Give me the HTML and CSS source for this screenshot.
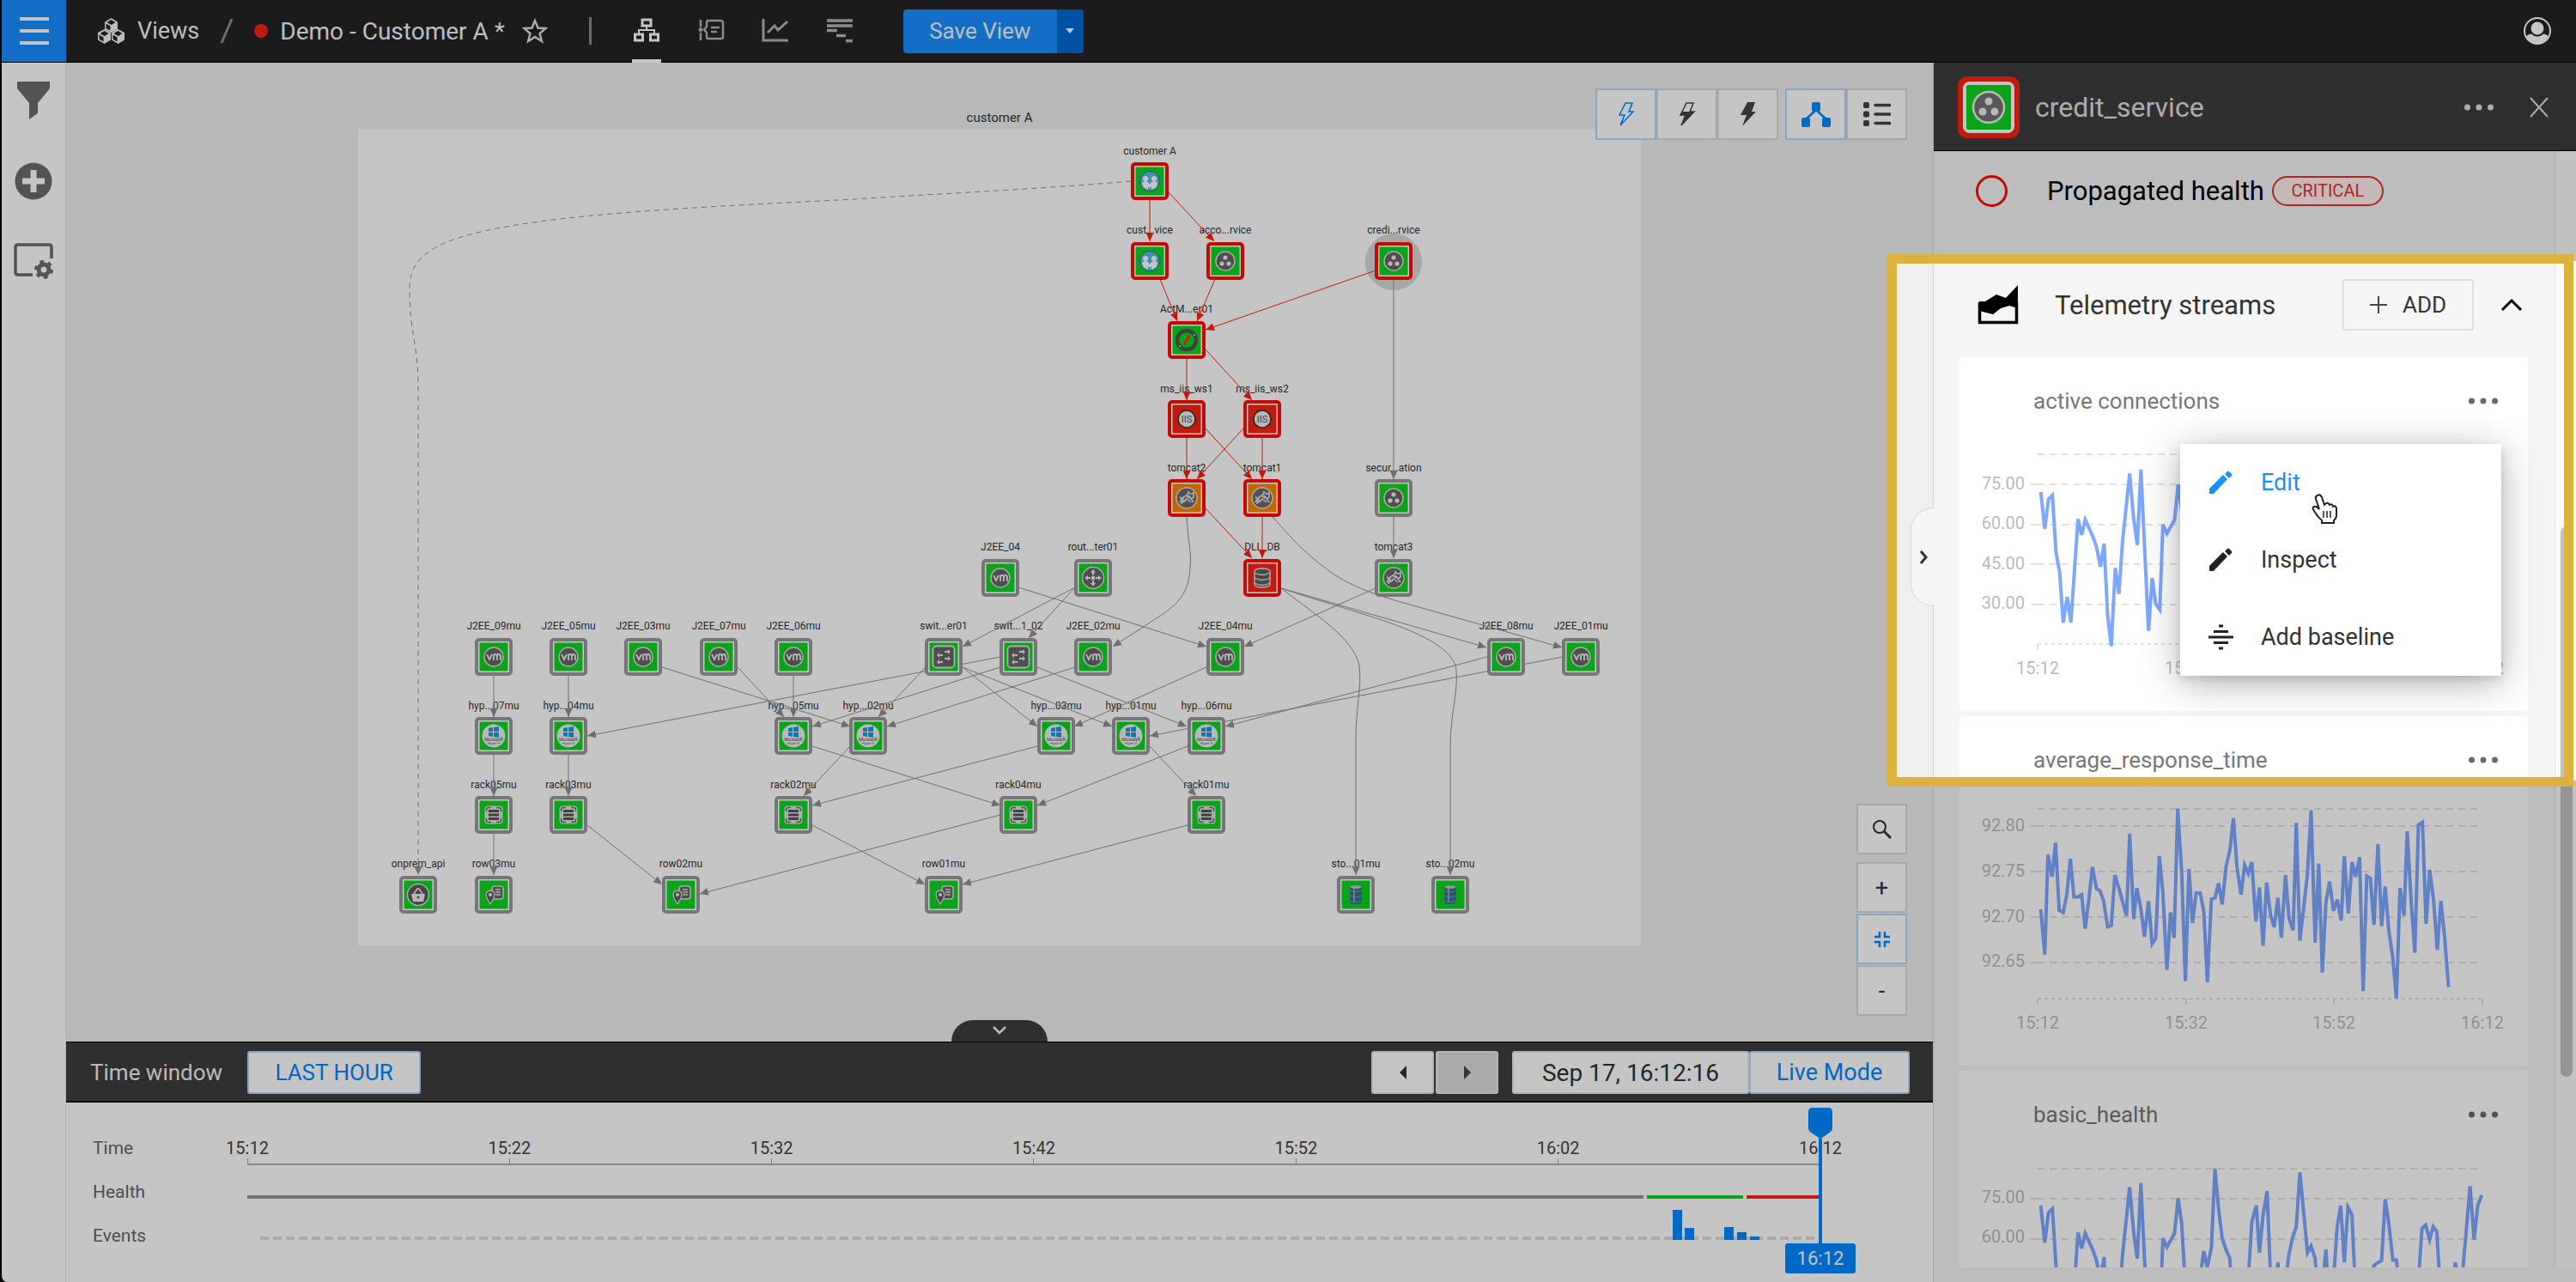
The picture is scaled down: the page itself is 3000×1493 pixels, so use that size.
FILE: index.html
```html
<!DOCTYPE html>
<html lang="en">
<head>
<meta charset="utf-8">
<title>Demo - Customer A</title>
<link rel="stylesheet" href="styles.css">
</head>
<body>
<svg class="defs" width="0" height="0" aria-hidden="true">
  <defs>
    <marker id="arrow-red" viewBox="0 0 10 9" refX="10" refY="4.5" markerWidth="10" markerHeight="9" markerUnits="userSpaceOnUse" orient="auto"><path d="M0 0L10 4.5 0 9z" fill="#ff2010"/></marker>
    <marker id="arrow-gray" viewBox="0 0 10 9" refX="10" refY="4.5" markerWidth="10" markerHeight="9" markerUnits="userSpaceOnUse" orient="auto"><path d="M0 0L10 4.5 0 9z" fill="#8f8f8f"/></marker>
    <g id="frame">
      <rect x="-20" y="-20" width="40" height="40" rx="3" fill="#fff" stroke-width="4"/>
    </g>
    <g id="i-people">
      <circle r="11.5" fill="#58b9e8" stroke="#2a7d63"/>
      <g fill="#fff"><circle cx="-5" cy="-3" r="3"/><circle cx="5" cy="-3" r="3"/><path d="M-9 3q0-3 4-3 3 0 5 4 2-4 5-4 4 0 4 3l-2 5H5L3 10H2V6L0 8-2 6V10H-3L-5 8H-7z"/></g>
    </g>
    <g id="i-dots">
      <circle r="11" fill="#666" stroke="#ddd" stroke-width="1.5"/>
      <g fill="#eee"><circle cy="-4" r="2.6"/><circle cx="-4" cy="3" r="2.6"/><circle cx="4" cy="3" r="2.6"/></g>
    </g>
    <g id="i-active">
      <circle r="11" fill="none" stroke="#525252" stroke-width="4.5"/>
      <path d="M-4 6Q-3-3 4-7 4 0-2 6z" fill="#d44b14"/><circle cx="9" cy="-6" r="1" fill="#ddd"/><circle cx="-8" cy="7" r="1" fill="#ddd"/>
    </g>
    <g id="i-iis">
      <circle r="10" fill="#eee" stroke="#333" stroke-width="1.5"/>
      <text y="4" text-anchor="middle" font-size="11" fill="#555">IIS</text>
    </g>
    <g id="i-tomcat">
      <circle r="12" fill="#6a6a6a" stroke="#ddd" stroke-width="1.5"/>
      <path d="M-8 5L-4-1 1-4 2-7 4-5 7-5 8-7 8-1 5 1 8 5M-4-1L-5 5 0 1 5 5M-1-3L3 0M-8-1L-4 2M-7 6L-1 3M2-3L6 2" fill="none" stroke="#e2e2e2" stroke-width="1.6"/>
    </g>
    <g id="i-vm">
      <circle r="11" fill="#666" stroke="#ddd" stroke-width="1.5"/>
      <path d="M-8-3L-5 3-2-3M0 4V-2Q0-3 2-3 4-3 4 0V4M4-1Q4-3 6-3 8-3 8 0V4" fill="none" stroke="#eee" stroke-width="1.8"/>
    </g>
    <g id="i-router">
      <circle r="12.5" fill="#666" stroke="#ddd" stroke-width="1.5"/>
      <rect x="-2" y="-2" width="4" height="4" fill="#eee"/>
      <path d="M0-10L3-6H1V-3H-1V-6H-3zM0 10L3 6H1V3H-1V6H-3zM-10 0L-6-3V-1H-3V1H-6V3zM10 0L6-3V-1H3V1H6V3z" fill="#eee"/>
    </g>
    <g id="i-switch">
      <rect x="-12.5" y="-12.5" width="25" height="25" rx="4" fill="#666" stroke="#ddd" stroke-width="1.8"/>
      <path d="M-8-2L-5-5V-3H-1V-1H-5V1zM-8 6L-5 3V5H-1V7H-5V9zM8-6L5-9V-7H1V-5H5V-3zM8 2L5-1V1H1V3H5V5z" fill="#e6e6e6"/>
    </g>
    <g id="i-db">
      <path d="M-9-7Q-9-11 0-11 9-11 9-7V7Q9 11 0 11-9 11-9 7z" fill="#5c5c5c" stroke="#ddd" stroke-width="1.5"/>
      <path d="M-9-6Q0-1 9-6M-9 0Q0 5 9 0M-9 6Q0 11 9 6" fill="none" stroke="#ddd" stroke-width="1.4"/>
    </g>
    <g id="i-win">
      <circle r="13.5" fill="#f0f0f0"/>
      <path d="M-6-9L-1-10V-5H-6zM0-10L6-11V-5H0zM-6-4H-1V1L-6 0zM0-4H6V2L0 1z" fill="#0c9ce8"/>
      <text y="6" text-anchor="middle" font-size="5" fill="#444">Microsoft</text>
      <text y="10" text-anchor="middle" font-size="4" fill="#666">Hyper-V</text>
    </g>
    <g id="i-rack">
      <rect x="-10.5" y="-10.5" width="21" height="21" rx="4" fill="#e0e0e0"/>
      <path d="M-8.500-4V-6Q-8.500-8.500-6-8.500H-3M8.500-4V-6Q8.500-8.500 6-8.500H3M-8.500 4V6Q-8.500 8.500-6 8.500H-3M8.500 4V6Q8.500 8.500 6 8.500H3" fill="none" stroke="#6c6c6c" stroke-width="1.500"/>
      <path d="M-6-4.500H6M-6 0H6M-6 4.500H6" stroke="#555" stroke-width="2.800"/>
    </g>
    <g id="i-row">
      <rect x="-2" y="-10" width="13" height="15" rx="3" fill="#666" stroke="#ddd" stroke-width="1.500"/>
      <path d="M2-6H8M2-3H8M2 0H8" stroke="#ddd" stroke-width="1.300"/>
      <path d="M-4 11L-8 4Q-11-4-4-5 3-4 0 4z" fill="#5c5c5c" stroke="#ddd" stroke-width="1.300"/><circle cx="-4" cy="0" r="2" fill="#eee"/>
    </g>
    <g id="i-basket">
      <circle r="12.5" fill="#5a5a5a" stroke="#ddd" stroke-width="1.5"/>
      <path d="M-8-1H8L6 8H-6z" fill="#eee"/><path d="M-5-1L-1-7H1L5-1" fill="none" stroke="#eee" stroke-width="1.6"/><circle cy="3" r="1.5" fill="#5a5a5a"/>
    </g>
    <g id="i-store">
      <path d="M-7-8Q-7-11 0-11 7-11 7-8V8Q7 11 0 11-7 11-7 8z" fill="#55636d"/>
      <path d="M-7-5Q0-2 7-5M-7 1Q0 4 7 1M-7 7Q0 10 7 7" fill="none" stroke="#1d9ad6" stroke-width="2.2"/>
      <path d="M-2-7V9" stroke="#b9c3ca" stroke-width="2" opacity=".6"/>
      <ellipse cy="-9" rx="6.500" ry="2" fill="#b9c3ca"/>
    </g>
    <g id="ok"><use href="#frame" stroke="#999"/><rect x="-16.5" y="-16.5" width="33" height="33" rx="1" fill="#0ed322"/></g>
    <g id="ok-crit"><use href="#frame" stroke="#ff0d04"/><rect x="-16.5" y="-16.5" width="33" height="33" rx="1" fill="#0ed322"/></g>
    <g id="warn-crit"><use href="#frame" stroke="#ff0d04"/><rect x="-16.5" y="-16.5" width="33" height="33" rx="1" fill="#ff8300"/></g>
    <g id="crit"><use href="#frame" stroke="#ff0d04"/><rect x="-16.5" y="-16.5" width="33" height="33" rx="1" fill="#f92413"/></g>
    <g id="pencil"><path d="M1 28V22L17 6 22 11 6 28z"/><path d="M19 5L22 2Q23 1 24 2L27 5Q28 6 27 7L24 10z"/></g>
    <polyline id="load-line" fill="none" stroke="#7da8ff" stroke-width="4" vector-effect="non-scaling-stroke" transform="translate(-102 -346) scale(.523 .3782)" points="376,1330 385,1444 393,1353 402,1340 410,1518 418,1575 426,1732 435,1653 443,1732 459,1413 467,1462 475,1415 492,1467 500,1498 509,1560 517,1489 525,1710 533,1804 542,1564 550,1644 558,1484 574,1273 583,1413 591,1493 599,1261 616,1757 624,1595 632,1675 641,1692 648,1431 657,1458 674,1415 682,1307 690,1387 698,1580 714,1700 730,1560 739,1470 747,1520 756,1458 764,1216 772,1340 780,1430 789,1468 797,1492 805,1660 821,1720 838,1560 846,1380 856,1330 863,1475 871,1360 880,1285 888,1560 896,1680 904,1505 912,1680 921,1560 929,1478 937,1428 945,1395 953,1228 961,1345 970,1475 978,1455 987,1492 995,1640 1003,1580 1011,1465 1019,1640 1028,1560 1036,1395 1044,1330 1052,1505 1060,1335 1069,1358 1077,1600 1110,1570 1118,1515 1127,1505 1135,1500 1143,1310 1151,1385 1160,1498 1168,1498 1176,1600 1217,1560 1225,1400 1233,1390 1242,1435 1250,1395 1258,1410 1266,1600 1290,1640 1299,1505 1307,1560 1316,1525 1324,1400 1332,1270 1341,1435 1349,1330 1358,1298"/>
  </defs>
</svg>

<div class="app">
  <header class="topbar">
    <button class="burger" aria-label="Menu"><span></span><span></span><span></span></button>
    <nav class="crumbs">
      <a class="views" href="#views">
        <svg width="31" height="30" viewBox="0 0 31 30" fill="#f5f5f5"><path d="M15.500 0L23 4.500V13L15.500 17 8 13V4.500zM7.500 13L15 17V25.500L7.500 30 0 25.500V17zM23.500 13L31 17V25.500L23.500 30 16 25.500V17z"/><path d="M15.500 2L20.500 5 15.500 8 10.500 5zM7.500 15L12.500 18 7.500 21 2.500 18zM23.500 15L28.500 18 23.500 21 18.500 18zM9.500 6.500L14.500 9.500V14.500L9.500 12zM1.500 19.500L6.500 22.500V27.500L1.500 24.500zM17.500 19.500L22.500 22.500V27.500L17.500 24.500z" fill="#232323"/></svg>
        Views
      </a>
      <svg width="16" height="30" viewBox="0 0 16 30"><path d="M14 1L2 29" stroke="#8c8c8c" stroke-width="3"/></svg>
      <span class="view-name"><i class="dot"></i>Demo - Customer A *</span>
      <button class="icon-btn" aria-label="Add to favourites"><svg width="30" height="30" viewBox="0 0 30 30"><path d="M15 3L18.500 11.500 27.500 12 20.500 18 23 27 15 22 7 27 9.500 18 2.500 12 11.500 11.500z" fill="none" stroke="#e0e0e0" stroke-width="2.400"/></svg></button>
    </nav>
    <i class="bar-divider"></i>
    <nav class="tabs">
      <button class="tab active" aria-label="Topology"><svg width="32" height="30" viewBox="0 0 32 30" fill="none" stroke="#fff" stroke-width="3"><rect x="11" y="3" width="10" height="7"/><rect x="2.500" y="20" width="9" height="7"/><rect x="20.500" y="20" width="9" height="7"/><path d="M16 10V14M7 20V15H25V20" stroke-width="2"/></svg></button>
      <button class="tab" aria-label="Events"><svg width="32" height="30" viewBox="0 0 32 30" fill="none" stroke="#b5b5b5" stroke-width="2.500"><path d="M4 3V27"/><circle cx="4" cy="14.500" r="3" fill="#b5b5b5" stroke="#232323" stroke-width="1"/><path d="M12 4H27Q30 4 30 7V23Q30 25 27 25H13Q11 25 11 23V18L8 14.500 11 11V6Q11 4 13 4M16 12H26M16 17H23"/></svg></button>
      <button class="tab" aria-label="Telemetry"><svg width="32" height="30" viewBox="0 0 32 30" fill="none" stroke="#b5b5b5" stroke-width="3"><path d="M2 2V27H31M7 18L15 10 19 15 30 5"/></svg></button>
      <button class="tab" aria-label="Traces"><svg width="32" height="30" viewBox="0 0 32 30" stroke="#b5b5b5" stroke-width="3.500"><path d="M1 4H31M1 10H31M1 15.500H13M12 21.500H23M23 27.500H31"/></svg></button>
    </nav>
    <div class="save">
      <button class="save-main">Save View</button><button class="save-more" aria-label="More save options"><svg width="10" height="8" viewBox="0 0 10 8"><path d="M0 1H10L5 7z" fill="#fff"/></svg></button>
    </div>
    <button class="icon-btn avatar" aria-label="Account"><svg width="34" height="34" viewBox="0 0 34 34"><circle cx="17" cy="17" r="15" fill="none" stroke="#fff" stroke-width="2"/><path d="M4 23Q8 20 12 20H22Q26 20 30 23 26 32 17 32 8 32 4 23z" fill="#fff"/><circle cx="17" cy="14" r="8.500" fill="#fff" stroke="#232323" stroke-width="2"/></svg></button>
  </header>

  <div class="body">
    <aside class="rail">
      <button class="icon-btn" aria-label="Filter"><svg width="40" height="44" viewBox="0 0 40 44" fill="#6c6c6c"><path d="M1 0H39V8L25 25V37L15 44V25L1 8z"/></svg></button>
      <button class="icon-btn" aria-label="Add"><svg width="44" height="44" viewBox="0 0 44 44"><circle cx="22" cy="22" r="21.500" fill="#6c6c6c"/><path d="M22 9V35M9 22H35" stroke="#fff" stroke-width="7"/></svg></button>
      <button class="icon-btn" aria-label="View settings"><svg width="46" height="42" viewBox="0 0 46 42"><path d="M22 37H5Q2 37 2 34V5Q2 2 5 2H41Q44 2 44 5V18" fill="none" stroke="#6c6c6c" stroke-width="3.500"/><circle cx="35" cy="31" r="6" fill="none" stroke="#6c6c6c" stroke-width="5"/><circle cx="35" cy="31" r="9" fill="none" stroke="#6c6c6c" stroke-width="4" stroke-dasharray="4.400 5"/></svg></button>
    </aside>

    <main class="center">
      <section class="stage">
        <div class="canvas-title">customer A</div>
        <svg class="graph" viewBox="417 150 1494 951" role="img" aria-label="Component topology">
          <rect class="sheet" x="417" y="150" width="1494" height="951"/>
          <circle cx="1623" cy="305" r="33" fill="#d8d8d8"/>
          <g class="labels">
            <text x="1339" y="180">customer A</text><text x="1339" y="272">cust...vice</text><text x="1427" y="272">acco...rvice</text><text x="1623" y="272">credi...rvice</text>
            <text x="1382" y="364">ActM...er01</text><text x="1382" y="457">ms_iis_ws1</text><text x="1470" y="457">ms_iis_ws2</text>
            <text x="1382" y="549">tomcat2</text><text x="1470" y="549">tomcat1</text><text x="1623" y="549">secur...ation</text>
            <text x="1165" y="641">J2EE_04</text><text x="1273" y="641">rout...ter01</text><text x="1470" y="641">DLL_DB</text><text x="1623" y="641">tomcat3</text>
            <text x="575" y="733">J2EE_09mu</text><text x="662" y="733">J2EE_05mu</text><text x="749" y="733">J2EE_03mu</text><text x="837" y="733">J2EE_07mu</text><text x="924" y="733">J2EE_06mu</text><text x="1099" y="733">swit...er01</text><text x="1186" y="733">swit...1_02</text><text x="1273" y="733">J2EE_02mu</text><text x="1427" y="733">J2EE_04mu</text><text x="1754" y="733">J2EE_08mu</text><text x="1841" y="733">J2EE_01mu</text>
            <text x="575" y="826">hyp...07mu</text><text x="662" y="826">hyp...04mu</text><text x="924" y="826">hyp...05mu</text><text x="1011" y="826">hyp...02mu</text><text x="1230" y="826">hyp...03mu</text><text x="1317" y="826">hyp...01mu</text><text x="1405" y="826">hyp...06mu</text>
            <text x="575" y="918">rack05mu</text><text x="662" y="918">rack03mu</text><text x="924" y="918">rack02mu</text><text x="1186" y="918">rack04mu</text><text x="1405" y="918">rack01mu</text>
            <text x="487" y="1010">onprem_api</text><text x="575" y="1010">row03mu</text><text x="793" y="1010">row02mu</text><text x="1099" y="1010">row01mu</text><text x="1579" y="1010">sto...01mu</text><text x="1689" y="1010">sto...02mu</text>
          </g>
          <path d="M1317 211C1200 221 1050 228 995 232 800 242 600 250 520 282 485 297 477 315 477 335 477 390 487 400 487 450V1019" class="edge" stroke-dasharray="6 5" marker-end="url(#arrow-gray)"/>
          <g class="edge">
            <path d="M1623 325V558"/><path d="M1623 602V650"/>
            <path d="M1382 602C1383 628 1388 640 1386 662 1384 690 1374 702 1350 718L1296 753"/>
            <path d="M1482 602C1500 622 1515 640 1539 658 1565 680 1595 690 1624 699L1819 754"/>
            <path d="M1492 685L1731 754"/>
            <path d="M1492 685C1530 715 1576 742 1583 775 1586 800 1579 825 1579 860V1019"/>
            <path d="M1492 685C1580 715 1680 735 1695 775 1700 800 1689 830 1689 870V1019"/>
            <path d="M1602 685L1449 753"/><path d="M1186 684L1405 753"/><path d="M1252 684L1121 753"/><path d="M1252 684L1198 743"/>
            <path d="M1165 765L684 857"/><path d="M1165 777L946 846"/><path d="M1208 777L1382 846"/>
            <path d="M1078 777L1023 835"/><path d="M1121 777L1208 846"/><path d="M1121 777L1295 846"/>
            <path d="M1252 777L1033 846"/><path d="M1405 777L1251 846"/><path d="M1732 765L1427 846"/><path d="M1820 765L1339 857"/>
            <path d="M771 777L990 846"/><path d="M859 777L913 835"/><path d="M924 787V835"/><path d="M575 787V835"/><path d="M662 787V835"/>
            <path d="M575 879V927"/><path d="M662 879V927"/><path d="M575 971V1019"/><path d="M684 961L771 1030"/>
            <path d="M946 869L1165 938"/><path d="M990 869L936 927"/><path d="M1208 869L946 938"/><path d="M1383 869L1208 938"/><path d="M1339 869L1393 927"/>
            <path d="M1165 949L815 1041"/><path d="M946 961L1077 1030"/><path d="M1383 961L1121 1030"/>
          </g>
          <g class="edge critical">
            <path d="M1339 232V281"/><path d="M1360 223L1414 281"/><path d="M1351 325L1371 374"/><path d="M1415 325L1394 374"/><path d="M1602 315L1404 384"/>
            <path d="M1382 417V466"/><path d="M1404 407L1458 466"/><path d="M1382 509V558"/><path d="M1404 499L1458 558"/><path d="M1470 509V558"/><path d="M1448 499L1394 558"/>
            <path d="M1404 592L1458 650"/><path d="M1470 602V650"/>
          </g>
          <g transform="translate(1339 211)"><use href="#ok-crit"/><use href="#i-people"/></g>
          <g transform="translate(1339 304)"><use href="#ok-crit"/><use href="#i-people"/></g>
          <g transform="translate(1427 304)"><use href="#ok-crit"/><use href="#i-dots"/></g>
          <g transform="translate(1623 304)"><use href="#ok-crit"/><use href="#i-dots"/></g>
          <g transform="translate(1382 396)"><use href="#ok-crit"/><use href="#i-active"/></g>
          <g transform="translate(1382 488)"><use href="#crit"/><use href="#i-iis"/></g>
          <g transform="translate(1470 488)"><use href="#crit"/><use href="#i-iis"/></g>
          <g transform="translate(1382 580)"><use href="#warn-crit"/><use href="#i-tomcat"/></g>
          <g transform="translate(1470 580)"><use href="#warn-crit"/><use href="#i-tomcat"/></g>
          <g transform="translate(1623 580)"><use href="#ok"/><use href="#i-dots"/></g>
          <g transform="translate(1165 673)"><use href="#ok"/><use href="#i-vm"/></g>
          <g transform="translate(1273 673)"><use href="#ok"/><use href="#i-router"/></g>
          <g transform="translate(1470 673)"><use href="#crit"/><use href="#i-db"/></g>
          <g transform="translate(1623 673)"><use href="#ok"/><use href="#i-tomcat"/></g>
          <g transform="translate(575 765)"><use href="#ok"/><use href="#i-vm"/></g>
          <g transform="translate(662 765)"><use href="#ok"/><use href="#i-vm"/></g>
          <g transform="translate(749 765)"><use href="#ok"/><use href="#i-vm"/></g>
          <g transform="translate(837 765)"><use href="#ok"/><use href="#i-vm"/></g>
          <g transform="translate(924 765)"><use href="#ok"/><use href="#i-vm"/></g>
          <g transform="translate(1099 765)"><use href="#ok"/><use href="#i-switch"/></g>
          <g transform="translate(1186 765)"><use href="#ok"/><use href="#i-switch"/></g>
          <g transform="translate(1273 765)"><use href="#ok"/><use href="#i-vm"/></g>
          <g transform="translate(1427 765)"><use href="#ok"/><use href="#i-vm"/></g>
          <g transform="translate(1754 765)"><use href="#ok"/><use href="#i-vm"/></g>
          <g transform="translate(1841 765)"><use href="#ok"/><use href="#i-vm"/></g>
          <g transform="translate(575 857)"><use href="#ok"/><use href="#i-win"/></g>
          <g transform="translate(662 857)"><use href="#ok"/><use href="#i-win"/></g>
          <g transform="translate(924 857)"><use href="#ok"/><use href="#i-win"/></g>
          <g transform="translate(1011 857)"><use href="#ok"/><use href="#i-win"/></g>
          <g transform="translate(1230 857)"><use href="#ok"/><use href="#i-win"/></g>
          <g transform="translate(1317 857)"><use href="#ok"/><use href="#i-win"/></g>
          <g transform="translate(1405 857)"><use href="#ok"/><use href="#i-win"/></g>
          <g transform="translate(575 949)"><use href="#ok"/><use href="#i-rack"/></g>
          <g transform="translate(662 949)"><use href="#ok"/><use href="#i-rack"/></g>
          <g transform="translate(924 949)"><use href="#ok"/><use href="#i-rack"/></g>
          <g transform="translate(1186 949)"><use href="#ok"/><use href="#i-rack"/></g>
          <g transform="translate(1405 949)"><use href="#ok"/><use href="#i-rack"/></g>
          <g transform="translate(487 1042)"><use href="#ok"/><use href="#i-basket"/></g>
          <g transform="translate(575 1042)"><use href="#ok"/><use href="#i-row"/></g>
          <g transform="translate(793 1042)"><use href="#ok"/><use href="#i-row"/></g>
          <g transform="translate(1099 1042)"><use href="#ok"/><use href="#i-row"/></g>
          <g transform="translate(1579 1042)"><use href="#ok"/><use href="#i-store"/></g>
          <g transform="translate(1689 1042)"><use href="#ok"/><use href="#i-store"/></g>
        </svg>

        <div class="stage-tools">
          <div class="group">
            <button class="tool on" aria-label="No propagation"><svg width="20" height="30" viewBox="0 0 20 30"><path d="M9 2H17L13 12H18L3 28 8 16H2z" fill="none" stroke="#08f" stroke-width="1.500"/></svg></button>
            <button class="tool" aria-label="Partial propagation"><svg width="20" height="30" viewBox="0 0 20 30"><path d="M9 2H17L13 12H18L3 28 8 16H2z" fill="none" stroke="#444" stroke-width="1.500"/><path d="M4 12H18L3 28 8 16H2z" fill="#444"/></svg></button>
            <button class="tool" aria-label="Full propagation"><svg width="20" height="30" viewBox="0 0 20 30"><path d="M9 1H18L14 12H19L3 29 8 16H1z" fill="#444"/></svg></button>
          </div>
          <div class="group">
            <button class="tool on" aria-label="Graph"><svg width="36" height="30" viewBox="0 0 36 30" fill="#08f"><rect x="13" y="1" width="10" height="11" rx="2"/><rect x="1" y="19" width="10" height="11" rx="2"/><rect x="25" y="19" width="10" height="11" rx="2"/><path d="M7 20L18 10 29 20" fill="none" stroke="#08f" stroke-width="2.500"/></svg></button>
            <button class="tool" aria-label="List"><svg width="32" height="30" viewBox="0 0 32 30" fill="#444"><rect width="7" height="7" y="1" rx="2"/><rect width="7" height="7" y="11.500" rx="2"/><rect width="7" height="7" y="22" rx="2"/><path d="M14 4.500H31M14 15H31M14 25.500H31" stroke="#444" stroke-width="3.500" stroke-linecap="round"/></svg></button>
          </div>
        </div>

        <div class="zoom-tools">
          <button class="tool" aria-label="Search"><svg width="24" height="24" viewBox="0 0 24 24" fill="none" stroke="#333"><circle cx="9" cy="9" r="7" stroke-width="2"/><path d="M14 14L22 22" stroke-width="3"/></svg></button>
          <div class="stack">
            <button class="tool">+</button>
            <button class="tool on" aria-label="Fit to screen"><svg width="20" height="20" viewBox="0 0 20 20" fill="none" stroke="#08f" stroke-width="2.500"><path d="M7 1V7H1M13 1V7H19M7 19V13H1M13 19V13H19"/></svg></button>
            <button class="tool">-</button>
          </div>
        </div>
        <button class="drawer-tab" aria-label="Collapse timeline"><svg width="20" height="12" viewBox="0 0 20 12"><path d="M3 2L10 9 17 2" fill="none" stroke="#eee" stroke-width="2.500"/></svg></button>
      </section>

      <section class="time-bar">
        <span>Time window</span>
        <button class="plain on last">LAST HOUR</button>
        <div class="pager">
          <button class="plain" aria-label="Earlier"><svg width="8" height="16" viewBox="0 0 8 16"><path d="M8 0V16L0 8z" fill="#333"/></svg></button>
          <button class="plain disabled" aria-label="Later"><svg width="8" height="16" viewBox="0 0 8 16"><path d="M0 0V16L8 8z" fill="#444"/></svg></button>
        </div>
        <div class="now">
          <button class="plain date">Sep 17, 16:12:16</button><button class="plain on live">Live Mode</button>
        </div>
      </section>

      <section class="timeline">
        <span class="row-name">Time</span>
        <div class="track axis">
          <div class="hours"><span>15:12</span><span>15:22</span><span>15:32</span><span>15:42</span><span>15:52</span><span>16:02</span><span>16:12</span></div>
          <div class="ticks"><i></i><i></i><i></i><i></i><i></i><i></i><i></i></div>
        </div>
        <span class="row-name">Health</span>
        <div class="track health"><i class="unknown"></i><i class="good"></i><i class="bad"></i></div>
        <span class="row-name">Events</span>
        <div class="track events">
          <div class="bars"><i style="left:90.600%;height:35px"></i><i style="left:91.400%;height:14px"></i><i style="left:93.900%;height:15px"></i><i style="left:94.700%;height:9px"></i><i style="left:95.500%;height:4px"></i></div>
        </div>
        <div class="playhead">
          <svg width="28" height="36" viewBox="0 0 28 36"><path d="M5 0H23Q28 0 28 5V24Q28 26 26 28L16 35Q14 37 12 35L2 28Q0 26 0 24V5Q0 0 5 0z" fill="#08f"/></svg>
          <i></i><b>16:12</b>
        </div>
      </section>
    </main>

    <aside class="panel">
      <button class="handle" aria-label="Collapse panel"><svg width="12" height="18" viewBox="0 0 12 18"><path d="M3 2L9 9 3 16" fill="none" stroke="#333" stroke-width="3"/></svg></button>
      <header class="panel-head">
        <svg width="72" height="72" viewBox="0 0 72 72"><rect width="72" height="72" rx="11" fill="#f92413"/><rect x="6" y="6" width="60" height="60" rx="8" fill="#fff"/><rect x="10" y="10" width="52" height="52" rx="2" fill="#0ed322"/><circle cx="36" cy="36" r="18" fill="#737373" stroke="#f0f0f0" stroke-width="2.500"/><g fill="#f0f0f0"><circle cx="36" cy="29" r="4.500"/><circle cx="29" cy="41" r="4.500"/><circle cx="43" cy="41" r="4.500"/></g></svg>
        <h1>credit_service</h1>
        <button class="icon-btn" aria-label="More"><svg width="36" height="10" viewBox="0 0 36 10" fill="#e0e0e0"><circle cx="4.500" cy="5" r="3.500"/><circle cx="18" cy="5" r="3.500"/><circle cx="31.500" cy="5" r="3.500"/></svg></button>
        <button class="icon-btn close" aria-label="Close"><svg width="22" height="24" viewBox="0 0 22 24"><path d="M1 1L21 23M21 1L1 23" stroke="#e0e0e0" stroke-width="2"/></svg></button>
      </header>
      <div class="panel-body">
        <div class="streams">
          <div class="health-row">
            <i class="ring"></i><span>Propagated health</span><em>CRITICAL</em>
          </div>
          <div class="section-row">
            <svg width="48" height="46" viewBox="0 0 48 46"><path d="M2 19L9 19 22 11 33 15 47 0V27L37 24 27 27 18 34 2 30z"/><path d="M2.500 20V43.500H45.500V20" fill="none" stroke="#000" stroke-width="3.500"/></svg>
            <h2>Telemetry streams</h2>
            <button class="add"><svg width="20" height="20" viewBox="0 0 20 20"><path d="M10 0V20M0 10H20" stroke="#444" stroke-width="2"/></svg>ADD</button>
            <button class="icon-btn" aria-label="Collapse section"><svg width="26" height="16" viewBox="0 0 26 16"><path d="M2 14L13 3 24 14" fill="none" stroke="#000" stroke-width="3"/></svg></button>
          </div>
          <article class="card">
            <header><h3>active connections</h3><button class="icon-btn" aria-label="Stream menu"><svg width="36" height="10" viewBox="0 0 36 10" fill="#6a6a6a"><circle cx="4.500" cy="5" r="3.500"/><circle cx="18" cy="5" r="3.500"/><circle cx="31.500" cy="5" r="3.500"/></svg></button></header>
            <svg class="chart" viewBox="0 102 662 310">
              <path class="grid" d="M91 113H609M91 148H609M91 195H609M91 241H609M91 288H609"/><path class="base" d="M91 334H609"/>
              <path class="tick" d="M83 148H91M83 195H91M83 241H91M83 288H91M91 334V341M264 334V341M436 334V341M609 334V341"/>
              <g class="ylab"><text x="76" y="154">75.00</text><text x="76" y="200">60.00</text><text x="76" y="247">45.00</text><text x="76" y="293">30.00</text></g>
              <g class="xlab"><text x="91" y="369">15:12</text><text x="264" y="369">15:32</text><text x="436" y="369">15:52</text><text x="609" y="369">16:12</text></g>
              <use href="#load-line"/>
            </svg>
            <ul class="menu">
              <li><button class="hot"><svg width="29" height="30" viewBox="0 0 29 30" fill="#1890ff"><use href="#pencil"/></svg>Edit</button></li>
              <li><button><svg width="29" height="30" viewBox="0 0 29 30" fill="#222"><use href="#pencil"/></svg>Inspect</button></li>
              <li><button><svg width="29" height="30" viewBox="0 0 29 30" stroke="#222" stroke-width="3"><path d="M12 2H17M6 8.500H23M0 15H29M6 21.500H23M12 28H17"/></svg>Add baseline</button></li>
            </ul>
            <svg class="cursor" width="31" height="36" viewBox="0 0 31 36"><path d="M7 2Q10 0 12 4L15 13 17 11Q20 10 21 13 24 11 25 15 28 13 29 17V24Q29 29 26 31V34H12V31Q7 27 3 20 0 16 3 15 5 14 9 18L5 6Q4 3 7 2z" fill="#fff" stroke="#222" stroke-width="2"/><path d="M14 20V28M18 20V28M22 20V28" stroke="#222" stroke-width="1.500"/></svg>
          </article>
          <article class="card">
            <header><h3>average_response_time</h3><button class="icon-btn" aria-label="Stream menu"><svg width="36" height="10" viewBox="0 0 36 10" fill="#6a6a6a"><circle cx="4.500" cy="5" r="3.500"/><circle cx="18" cy="5" r="3.500"/><circle cx="31.500" cy="5" r="3.500"/></svg></button></header>
            <svg class="chart" viewBox="0 102 662 305">
              <path class="grid" d="M91 108H609M91 128H609M91 181H609M91 234H609M91 287H609"/><path class="base" d="M91 329H609"/>
              <path class="tick" d="M83 128H91M83 181H91M83 234H91M83 287H91M91 329V336M264 329V336M436 329V336M609 329V336"/>
              <g class="ylab"><text x="76" y="134">92.80</text><text x="76" y="187">92.75</text><text x="76" y="240">92.70</text><text x="76" y="292">92.65</text></g>
              <g class="xlab"><text x="91" y="364">15:12</text><text x="264" y="364">15:32</text><text x="436" y="364">15:52</text><text x="609" y="364">16:12</text></g>
              <polyline fill="none" stroke="#7da8ff" stroke-width="4" vector-effect="non-scaling-stroke" transform="translate(-102 66) scale(.523 .3782)" points="376,420 385,560 392,252 401,320 409,215 417,423 426,430 434,375 442,265 450,382 459,382 467,375 475,480 483,390 491,290 500,357 508,363 516,395 525,474 533,470 541,315 550,355 558,395 567,440 574,188 583,450 590,355 599,420 607,505 616,395 624,527 632,510 640,256 648,370 657,607 665,430 673,508 681,110 690,310 698,642 706,296 714,463 722,370 731,370 739,425 747,645 756,388 764,385 772,340 780,405 789,285 797,240 805,140 813,290 822,375 830,285 838,310 846,275 855,458 863,353 871,533 879,338 888,440 896,475 904,385 912,508 921,315 929,450 938,485 945,154 953,517 962,410 970,310 978,115 987,523 995,280 1003,615 1011,400 1019,335 1028,425 1036,390 1045,455 1052,256 1061,433 1069,275 1077,320 1086,260 1094,672 1102,318 1110,325 1118,468 1127,219 1135,472 1143,350 1151,485 1160,570 1168,694 1176,355 1185,440 1192,180 1201,400 1209,554 1217,160 1226,152 1234,465 1242,299 1251,395 1259,545 1267,395 1275,500 1284,660"/>
            </svg>
          </article>
          <article class="card">
            <header><h3>basic_health</h3><button class="icon-btn" aria-label="Stream menu"><svg width="36" height="10" viewBox="0 0 36 10" fill="#6a6a6a"><circle cx="4.500" cy="5" r="3.500"/><circle cx="18" cy="5" r="3.500"/><circle cx="31.500" cy="5" r="3.500"/></svg></button></header>
            <svg class="chart" viewBox="0 102 662 310">
              <path class="grid" d="M91 114H609M91 149H609M91 196H609M91 242H609M91 289H609"/>
              <path class="tick" d="M83 149H91M83 196H91"/>
              <g class="ylab"><text x="76" y="154">75.00</text><text x="76" y="200">60.00</text></g>
              <use href="#load-line"/>
            </svg>
          </article>
        </div>
        <div class="scroll"><i></i></div>
      </div>
    </aside>
  </div>

  <div class="shade"></div>
  <div class="spotlight"></div>
</div>
</body>
</html>
```

FILE: styles.css
```css
* { box-sizing: border-box; }
body {
  margin: 0;
  background: #000;
  color: #333;
  font-family: Roboto, "Liberation Sans", sans-serif;
  font-size: 27px;
}
button {
  margin: 0;
  padding: 0;
  border: 0;
  background: none;
  color: inherit;
  font: inherit;
  cursor: pointer;
}
svg { display: block; flex: none; }
.defs { position: absolute; }
h1, h2, h3 { margin: 0; font-weight: 400; }

.app {
  position: relative;
  display: flex;
  flex-direction: column;
  height: 100vh;
  overflow: hidden;
  border-left: 2px solid #000;
  border-bottom-left-radius: 8px;
  background: #fff;
}
.icon-btn { display: flex; align-items: center; justify-content: center; }

/* Top bar */
.topbar {
  display: flex;
  align-items: center;
  flex: none;
  height: 73px;
  border-bottom: 1px solid #000;
  background: #232323;
  color: #f5f5f5;
}
.burger {
  display: flex;
  flex-direction: column;
  align-items: center;
  justify-content: center;
  gap: 10px;
  width: 75px;
  height: 72px;
  background: #1890ff;
}
.burger span { width: 34px; height: 4px; background: #fff; }
.crumbs { display: flex; align-items: center; margin-left: 37px; }
.views {
  display: flex;
  align-items: center;
  gap: 15px;
  margin-right: 24px;
  color: inherit;
  text-decoration: none;
}
.view-name { display: flex; align-items: center; margin: 0 20px 0 24px; font-size: 28px; }
.dot { width: 16px; height: 16px; margin-right: 14px; border-radius: 50%; background: #f92413; }
.bar-divider { width: 3px; height: 32px; margin-left: 48px; background: #8c8c8c; }
.tabs { display: flex; align-self: stretch; gap: 41px; margin-left: 47px; }
.tab { width: 34px; height: 73px; border-bottom: 4px solid transparent; display: flex; align-items: center; justify-content: center; }
.tab.active { border-color: #fff; }
.save { display: flex; margin-left: 57px; border-radius: 4px; overflow: hidden; }
.save-main { width: 179px; height: 51px; background: #1890ff; font-size: 26px; }
.save-more { display: flex; align-items: center; justify-content: center; width: 31px; background: #0069d7; }
.avatar { margin-left: auto; margin-right: 28px; }

.body { display: flex; flex: 1; min-height: 0; }
.rail {
  display: flex;
  flex-direction: column;
  align-items: center;
  gap: 50px;
  flex: none;
  width: 75px;
  padding-top: 22px;
  border-right: 1px solid #e8e8e8;
}
.center { display: flex; flex-direction: column; flex: 1; min-width: 0; }

/* Topology canvas */
.stage {
  position: relative;
  display: flex;
  flex-direction: column;
  align-items: center;
  flex: 1;
  min-height: 0;
  padding-top: 52px;
  background: #efefef;
}
.canvas-title { height: 25px; font-size: 15px; line-height: 24px; }
.graph { width: 1494px; max-width: 100%; }
.sheet { fill: #fff; }
.labels { font-size: 12px; fill: #333; text-anchor: middle; }
.edge, .edge path { fill: none; stroke: #8f8f8f; }
.edge path { marker-end: url(#arrow-gray); }
.critical path { stroke: #ff2010; marker-end: url(#arrow-red); }
.stage-tools { position: absolute; top: 30px; right: 30px; display: flex; gap: 8px; }
.group { display: flex; }
.tool {
  display: flex;
  align-items: center;
  justify-content: center;
  width: 71px;
  height: 60px;
  border: 2px solid #d9d9d9;
  background: #fff;
}
.tool.on { border-color: #b0d8ff; }
.zoom-tools { position: absolute; right: 30px; bottom: 30px; display: flex; flex-direction: column; gap: 9px; }
.zoom-tools .tool { width: 59px; height: 59px; }
.stack { display: flex; flex-direction: column; gap: 1px; }
.drawer-tab {
  position: absolute;
  bottom: 0;
  left: 50%;
  display: flex;
  justify-content: center;
  width: 112px;
  height: 25px;
  margin-left: -56px;
  padding-top: 6px;
  border-radius: 28px 28px 0 0;
  background: #3e3e3e;
}

/* Time controls */
.time-bar {
  display: flex;
  align-items: center;
  flex: none;
  height: 71px;
  padding: 2px 27px 0 28px;
  border-top: 1px solid #000;
  border-bottom: 2px solid #000;
  background: #3e3e3e;
  color: #f0f0f0;
  font-size: 26px;
}
.plain {
  display: flex;
  align-items: center;
  justify-content: center;
  height: 50px;
  border: 2px solid #e8e8e8;
  border-radius: 3px;
  background: #fff;
  color: #333;
}
.plain.on { border-color: #b0d8ff; color: #08f; }
.plain.disabled { background: #dcdcdc; }
.last { width: 202px; margin-left: 29px; }
.pager { display: flex; gap: 2px; margin-left: auto; margin-right: 16px; }
.pager .plain { width: 73px; }
.now { display: flex; font-size: 28px; }
.date { width: 276px; }
.live { width: 187px; font-size: 27px; }

/* Timeline */
.timeline {
  position: relative;
  display: grid;
  grid-template-columns: 180px 1fr;
  grid-auto-rows: 51px;
  column-gap: 0;
  flex: none;
  height: 209px;
  padding: 28px 131px 0 31px;
  background: #fff;
}
.row-name { color: #666; font-size: 21px; line-height: 51px; }
.track { position: relative; }
.axis { padding-top: 13px; }
.hours { display: flex; justify-content: space-between; margin: 0 -30px; }
.hours span { width: 60px; color: #444; font-size: 20px; line-height: 24px; text-align: center; }
.ticks { display: flex; justify-content: space-between; height: 8px; border-bottom: 2px solid #b0b0b0; }
.ticks i { width: 1px; background: #aaa; }
.health { display: flex; align-items: center; gap: 4px; padding-top: 11px; }
.health i { height: 4px; }
.unknown { flex: 1625; background: #8f979f; }
.good { flex: 112; background: #0ed322; }
.bad { flex: 86; background: #f92413; }
.events {
  margin: 0 0 21px 15px;
  background: repeating-linear-gradient(90deg, #dcdcdc 0 10px, transparent 10px 15px) bottom / 100% 4px no-repeat;
}
.bars { position: absolute; inset: 0 0 0 -15px; }
.bars i { position: absolute; bottom: 0; width: 11px; background: #08f; }
.playhead {
  position: absolute;
  top: 6px;
  right: 90px;
  display: flex;
  flex-direction: column;
  align-items: center;
  width: 82px;
}
.playhead i { width: 4px; height: 122px; background: #08f; }
.playhead b {
  width: 82px;
  border-radius: 3px;
  background: #08f;
  color: #fff;
  font-size: 22px;
  font-weight: 400;
  line-height: 35px;
  text-align: center;
}

/* Details panel */
.panel {
  position: relative;
  display: flex;
  flex-direction: column;
  flex: none;
  width: 749px;
  padding-bottom: 17px;
  border-left: 1px solid #d9d9d9;
  background: #f5f5f5;
}
.handle {
  position: absolute;
  top: 518px;
  left: -27px;
  display: flex;
  align-items: center;
  justify-content: center;
  width: 28px;
  height: 115px;
  border: 1px solid #d9d9d9;
  border-right: 0;
  border-radius: 27px 0 0 27px;
  background: #f5f5f5;
}
.panel-head {
  display: flex;
  align-items: center;
  flex: none;
  height: 103px;
  padding: 2px 32px 0 28px;
  border-bottom: 1px solid #000;
  background: #3e3e3e;
  color: #e0e0e0;
}
.panel-head h1 { flex: 1; margin-left: 18px; font-size: 32px; }
.close { margin-left: 41px; }
.panel-body { display: flex; flex: 1; min-height: 0; }
.streams { flex: 1; padding: 0 31px 0 30px; overflow: hidden; }
.scroll { position: relative; width: 25px; border-left: 1px solid #e0e0e0; background: #fafafa; }
.scroll i {
  position: absolute;
  top: 437px;
  left: 6px;
  width: 14px;
  height: 641px;
  border-radius: 7px;
  background: #c1c1c1;
}
.health-row { display: flex; align-items: center; height: 92px; padding-left: 19px; color: #000; font-size: 31px; }
.ring { width: 37px; height: 37px; margin-right: 46px; border: 3px solid #ff0d04; border-radius: 50%; }
.health-row em {
  width: 130px;
  margin-left: 9px;
  border: 2px solid #e0302e;
  border-radius: 18px;
  background: #fff0ef;
  color: #e0302e;
  font-size: 20px;
  font-style: normal;
  line-height: 31px;
  text-align: center;
}
.section-row { display: flex; align-items: center; height: 122px; margin-top: 26px; padding: 0 6px 0 21px; }
.section-row h2 { flex: 1; margin-left: 42px; font-size: 31px; }
.add {
  display: flex;
  align-items: center;
  justify-content: center;
  gap: 18px;
  width: 153px;
  height: 60px;
  margin-right: 31px;
  border: 2px solid #dedede;
  border-radius: 3px;
  font-size: 26px;
}
.card { position: relative; margin-bottom: 6px; border-radius: 4px; background: #fff; }
.card header {
  display: flex;
  align-items: center;
  justify-content: space-between;
  height: 102px;
  padding: 0 34px 0 86px;
  color: #777;
}
.card h3 { font-size: 26px; }
.chart { width: 100%; }
.grid, .base, .tick { fill: none; stroke: #e2e2e2; stroke-width: 2; }
.grid { stroke-dasharray: 8 6; }
.base { stroke-dasharray: 4 4; }
.ylab, .xlab { fill: #bbb; font-size: 20px; }
.ylab { text-anchor: end; }
.xlab { text-anchor: middle; }

.menu {
  position: absolute;
  z-index: 2;
  top: 101px;
  right: 31px;
  width: 374px;
  margin: 0;
  padding: 0;
  background: #fff;
  box-shadow: 0 8px 44px rgba(0, 0, 0, .3), 0 4px 10px rgba(0, 0, 0, .12);
  list-style: none;
}
.menu button {
  display: flex;
  align-items: center;
  gap: 32px;
  width: 100%;
  height: 90px;
  padding-left: 33px;
  font-size: 27px;
}
.menu .hot { color: #1890ff; }
.cursor { position: absolute; z-index: 3; top: 159px; right: 221px; }

/* Guided-tour spotlight */
.shade {
  position: absolute;
  z-index: 5;
  top: 304px;
  right: 0;
  width: 795px;
  height: 605px;
  box-shadow: 0 0 0 3000px rgba(0, 0, 0, .227);
  pointer-events: none;
}
.spotlight {
  position: absolute;
  z-index: 6;
  top: 296px;
  right: 3px;
  width: 799px;
  height: 620px;
  border: 11px solid #dcb13c;
  pointer-events: none;
}
```
